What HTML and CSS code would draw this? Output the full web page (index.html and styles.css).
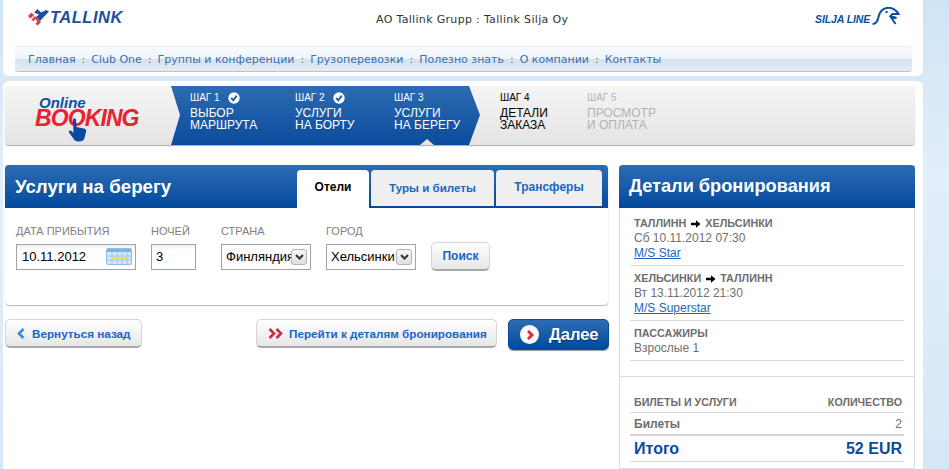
FILE: index.html
```html
<!DOCTYPE html>
<html lang="ru">
<head>
<meta charset="utf-8">
<title>Tallink Online Booking</title>
<link rel="stylesheet" href="styles.css">
</head>
<body>
<div class="page">
  <header class="top">
    <div class="brand-row">
      <div class="tallink">
        <svg class="tallink-mark" width="21" height="17" viewBox="0 0 21 17"><path d="M0 7 L3.5 3.5 L6 6 L2.5 9.5 Z M3.5 10.5 L7 7 L13 13 L9.5 16.5 L7.5 14.5 L9.5 12.5 L7 10 L5.5 12.5 Z" fill="#e8333c"/><path d="M6 3.5 L9.5 0 L13 3.5 L18 1 L21 2.5 L12 12 L8 8 L11 5.5 Z" fill="#1d4f9c"/></svg>
        <span class="tallink-name">TALLINK</span>
      </div>
      <div class="company">AO Tallink Grupp : Tallink Silja Oy</div>
      <div class="silja">
        <span class="silja-name">SILJA LINE</span>
        <svg width="32" height="20" viewBox="0 0 29 20"><path d="M1 17 C4 17 6 15 7 10 C8 5 10 2 15 1 C20 0 25 3 27 7 L21 7 L19 9 L25 11 L20 11 L24 17" fill="none" stroke="#0c4ea2" stroke-width="2"/><circle cx="15" cy="5" r="1.2" fill="#0c4ea2"/></svg>
      </div>
    </div>
    <nav class="nav">
      <a>Главная</a><span class="sep">:</span><a>Club One</a><span class="sep">:</span><a>Группы и конференции</a><span class="sep">:</span><a>Грузоперевозки</a><span class="sep">:</span><a>Полезно знать</a><span class="sep">:</span><a>О компании</a><span class="sep">:</span><a>Контакты</a>
    </nav>
  </header>

  <main class="main">
    <section class="steps">
      <div class="booking-logo">
        <span class="logo-online">Online</span>
        <span class="logo-booking">BOOKING</span>
        <svg class="logo-hand" width="19" height="24" viewBox="0 0 19 24"><path d="M5 1.5 C5 0 8 0 8 1.5 L8.5 9 L16 10.5 C18 11 18.5 12 18 14 L16.5 20 C16 22.5 14 23.5 11 23.5 C8 23.5 6 22.5 5 20 L1 14.5 C0 13 2 11.5 3.5 13 L5.5 15 Z" fill="#0b4a9e"/></svg>
      </div>
      <div class="steps-done">
        <div class="step step-one">
          <div class="step-num">ШАГ 1 <svg class="check" width="12" height="12" viewBox="0 0 12 12"><circle cx="6" cy="6" r="5.7" fill="#fff"/><path d="M3.2 6 L5.3 8.3 L8.8 3.6" fill="none" stroke="#1d5aa8" stroke-width="1.9"/></svg></div>
          <div class="step-title">ВЫБОР<br>МАРШРУТА</div>
        </div>
        <div class="step step-two">
          <div class="step-num">ШАГ 2 <svg class="check" width="12" height="12" viewBox="0 0 12 12"><circle cx="6" cy="6" r="5.7" fill="#fff"/><path d="M3.2 6 L5.3 8.3 L8.8 3.6" fill="none" stroke="#1d5aa8" stroke-width="1.9"/></svg></div>
          <div class="step-title">УСЛУГИ<br>НА БОРТУ</div>
        </div>
        <div class="step">
          <div class="step-num">ШАГ 3</div>
          <div class="step-title">УСЛУГИ<br>НА БЕРЕГУ</div>
        </div>
      </div>
      <div class="step step-four">
        <div class="step-num">ШАГ 4</div>
        <div class="step-title">ДЕТАЛИ<br>ЗАКАЗА</div>
      </div>
      <div class="step step-five">
        <div class="step-num">ШАГ 5</div>
        <div class="step-title">ПРОСМОТР<br>И ОПЛАТА</div>
      </div>
    </section>

    <div class="columns">
      <div class="left">
        <section class="card">
          <div class="card-head">
            <h1 class="head-title">Услуги на берегу</h1>
            <div class="tabs">
              <a class="tab tab-active tab-hotels">Отели</a>
              <a class="tab tab-tours">Туры и билеты</a>
              <a class="tab tab-transfers">Трансферы</a>
            </div>
          </div>
          <form class="search">
            <div class="field">
              <label class="label">Дата прибытия</label>
              <div class="box box-date">10.11.2012
                <svg class="cal" width="26" height="17" viewBox="0 0 26 17"><rect x=".5" y=".5" width="25" height="16" rx="1.5" fill="#d6e8f8" stroke="#8fbce4"/><rect x="1" y="1" width="24" height="3" fill="#7fb2e2"/><path d="M1 8H25M1 12H25M6 4V16M11 4V16M16 4V16M21 4V16" stroke="#9cc4e8" stroke-width="1"/><rect x="6" y="9" width="15" height="2.5" fill="#dce85a"/></svg>
              </div>
            </div>
            <div class="field field-nights">
              <label class="label">Ночей</label>
              <div class="box box-nights">3</div>
            </div>
            <div class="field field-country">
              <label class="label">Страна</label>
              <div class="box box-select box-country">Финляндия<span class="drop"><svg width="9" height="6" viewBox="0 0 9 6"><path d="M1 1 L4.5 4.5 L8 1" fill="none" stroke="#333" stroke-width="2"/></svg></span></div>
            </div>
            <div class="field field-city">
              <label class="label">Город</label>
              <div class="box box-select box-city">Хельсинки<span class="drop"><svg width="9" height="6" viewBox="0 0 9 6"><path d="M1 1 L4.5 4.5 L8 1" fill="none" stroke="#333" stroke-width="2"/></svg></span></div>
            </div>
            <button type="button" class="btn btn-search">Поиск</button>
          </form>
        </section>

        <div class="actions">
          <a class="btn btn-back"><svg width="8" height="11" viewBox="0 0 8 11"><path d="M6.5 1 L2 5.5 L6.5 10" fill="none" stroke="#3f86d8" stroke-width="2.6"/></svg>Вернуться назад</a>
          <a class="btn btn-details"><svg width="15" height="11" viewBox="0 0 15 11"><path d="M1.5 1 L6 5.5 L1.5 10 M8.5 1 L13 5.5 L8.5 10" fill="none" stroke="#c8303a" stroke-width="2.6"/></svg>Перейти к деталям бронирования</a>
          <a class="btn-next"><span class="next-dot"><svg width="8" height="10" viewBox="0 0 8 10"><path d="M2 1 L6 5 L2 9" fill="none" stroke="#e3213a" stroke-width="2.8"/></svg></span>Далее</a>
        </div>
      </div>

      <aside class="details">
        <h2 class="head-title details-head">Детали бронирования</h2>
        <div class="details-block">
          <div class="route">
            <div class="route-label">ТАЛЛИНН <svg class="arrow" width="10" height="8" viewBox="0 0 12 9"><path d="M0 3 H6 V0 L11.5 4.5 L6 9 V6 H0 Z" fill="#000"/></svg> ХЕЛЬСИНКИ</div>
            <div>Сб 10.11.2012 07:30</div>
            <a class="ship">M/S Star</a>
          </div>
          <div class="route">
            <div class="route-label">ХЕЛЬСИНКИ <svg class="arrow" width="10" height="8" viewBox="0 0 12 9"><path d="M0 3 H6 V0 L11.5 4.5 L6 9 V6 H0 Z" fill="#000"/></svg> ТАЛЛИНН</div>
            <div>Вт 13.11.2012 21:30</div>
            <a class="ship">M/S Superstar</a>
          </div>
          <div class="route route-pax">
            <div class="route-label">ПАССАЖИРЫ</div>
            <div>Взрослые 1</div>
          </div>
        </div>
        <div class="summary">
          <div class="sum-row sum-head"><span>БИЛЕТЫ И УСЛУГИ</span><span>КОЛИЧЕСТВО</span></div>
          <div class="sum-row sum-line"><b>Билеты</b><span>2</span></div>
          <div class="sum-row sum-total"><span>Итого</span><span>52 EUR</span></div>
        </div>
      </aside>
    </div>
  </main>
</div>
</body>
</html>
```

FILE: styles.css
```css
html, body { margin: 0; padding: 0; height: 469px; overflow: hidden; }
body {
  background: linear-gradient(180deg, #cfe4f6 0, #e2eef9 170px, #e0edf8 260px, #d5e7f7 469px);
  font-family: "Liberation Sans", Arial, sans-serif;
  color: #333;
}
.page { width: 920px; margin-left: 3px; }

/* header */
.top { background: #fff; height: 76px; border-radius: 0 0 6px 6px; }
.brand-row { height: 47px; display: flex; align-items: flex-start; }
.tallink { display: flex; align-items: center; margin: 9px 0 0 25px; width: 348px; height: 17px; }
.tallink-mark { flex: none; margin-right: 1px; }
.tallink-name { font: italic bold 16.5px "Liberation Sans", sans-serif; color: #1d4f9c; letter-spacing: .5px; }
.company { font: 11px "DejaVu Sans", Verdana, sans-serif; letter-spacing: .32px; color: #333; margin-top: 13px; width: 439px; white-space: nowrap; }
.silja { display: flex; align-items: flex-end; margin-top: 7px; }
.silja-name { font: italic bold 10.5px "Liberation Sans", sans-serif; color: #0c4ea2; letter-spacing: -.1px; margin-bottom: 2px; white-space: nowrap; }
.nav {
  margin: 0 11px 0 12px;
  height: 25px;
  padding-left: 13px;
  box-sizing: border-box;
  display: flex;
  align-items: center;
  font: 11px "DejaVu Sans", Verdana, sans-serif;
  color: #3a70ad;
  border-radius: 3px;
  border-bottom: 1px solid #b9c4d0;
  background: linear-gradient(180deg, #f7fafd 0, #eff4fa 50%, #d8e2ee 52%, #e4ebf4 100%);
  box-shadow: 0 -1px 0 #eef0f3;
  white-space: nowrap;
}
.sep { margin: 0 6px; color: #667; }

/* main */
.main { margin-top: 5px; background: #fff; border-radius: 6px 6px 0 0; padding: 5px 8px 0 2px; height: 388px; box-sizing: border-box; }

/* steps */
.steps {
  height: 59px;
  display: flex;
  border-radius: 4px;
  background: linear-gradient(180deg, #f5f5f5, #e4e4e4);
  box-shadow: 0 1px 1px #a9a9a9;
  margin-bottom: 20px;
}
.booking-logo { width: 166px; flex: none; position: relative; }
.logo-online { position: absolute; left: 34px; top: 8px; font: italic bold 15px "Liberation Sans", sans-serif; color: #11509f; }
.logo-booking { position: absolute; left: 30px; top: 19px; font: italic bold 23px "Liberation Sans", sans-serif; color: #ea2130; letter-spacing: -.9px; }
.logo-hand { position: absolute; left: 63px; top: 32px; }
.steps-done {
  flex: none;
  width: 309px;
  box-sizing: border-box;
  padding-left: 19px;
  display: flex;
  background: linear-gradient(180deg, #2d6bb2, #0a4b9c);
  clip-path: polygon(0 0, 298px 0, 309px 29px, 298px 59px, 263px 59px, 256px 53px, 249px 59px, 0 59px, 9px 29px);
}
.step { color: #fff; padding-top: 4px; }
.step-one { width: 105px; }
.step-two { width: 99px; }
.step-num { font-size: 10px; line-height: 13px; height: 15px; display: flex; align-items: center; gap: 4px; white-space: pre; }
.check { margin-left: 2px; }
.step-title { font-size: 12px; line-height: 12px; margin-top: 2px; white-space: nowrap; }
.step-four { color: #000; margin-left: 20px; width: 87px; flex: none; }
.step-five { color: #b2b2b2; flex: none; }

/* columns */
.columns { display: flex; gap: 11px; align-items: flex-start; }
.left { width: 603px; flex: none; }
.card { background: #fff; border-radius: 4px; box-shadow: 0 1px 1px #b5b5b5, 0 0 1px #d5d5d5; height: 140px; }
.card-head {
  height: 43px;
  display: flex;
  justify-content: space-between;
  border-radius: 4px 4px 0 0;
  background: linear-gradient(180deg, #2d6cb3, #034a9c);
}
.head-title { margin: 0; font: bold 18.7px/43px "Liberation Sans", sans-serif; color: #fff; padding-left: 10px; }
.tabs { display: flex; align-items: flex-end; gap: 2px; padding: 5px 6px 0 0; }
.tab {
  height: 36px;
  box-sizing: border-box;
  margin-bottom: 2px;
  border-radius: 4px 4px 0 0;
  background: #efefef;
  color: #1b66c0;
  font: bold 12px/35px "Liberation Sans", sans-serif;
  text-align: center;
}
.tab-active { background: #fff; color: #000; height: 38px; margin-bottom: 0; }
.tab-hotels { width: 72px; }
.tab-tours { width: 123px; font-size: 11.6px; }
.tab-transfers { width: 106px; }

.search { display: flex; align-items: flex-start; padding: 16px 0 0 11px; }
.field { display: flex; flex-direction: column; margin-right: 15px; }
.field-nights { margin-right: 25px; }
.label { font-size: 11px; line-height: 14px; height: 20px; color: #808080; text-transform: uppercase; white-space: nowrap; }
.box {
  height: 26px;
  box-sizing: border-box;
  border: 1px solid #a3a3a3;
  background: linear-gradient(180deg, #f0f0f0 0, #fff 5px);
  font-size: 13px;
  line-height: 24px;
  color: #000;
  padding-left: 5px;
  position: relative;
  white-space: nowrap;
  overflow: hidden;
}
.box-date { width: 120px; }
.box-nights { width: 45px; padding-left: 4px; }
.box-country { width: 90px; padding-left: 4px; background: #fdfdfd; }
.box-city { width: 90px; padding-left: 4px; background: #fdfdfd; }
.cal { position: absolute; right: 3px; top: 3px; }
.drop {
  position: absolute;
  right: 3px;
  top: 4px;
  width: 16px;
  height: 16px;
  box-sizing: border-box;
  border: 1px solid #b3b3b3;
  border-radius: 3px;
  background: linear-gradient(180deg, #f7f7f7, #dfdfdf);
  display: flex;
  align-items: center;
  justify-content: center;
}

.btn {
  flex: none;
  box-sizing: border-box;
  height: 29px;
  border: 1px solid #d6d6d6;
  border-bottom: 2px solid #a8a8a8;
  border-radius: 5px;
  background: linear-gradient(180deg, #fff, #e6e6e6);
  color: #1b66c0;
  font: bold 11.7px "Liberation Sans", sans-serif;
  display: flex;
  align-items: center;
  white-space: nowrap;
}
.btn-search { width: 59px; margin-top: 18px; justify-content: center; padding: 0; font-size: 12px; }
.actions { display: flex; align-items: flex-start; margin-top: 14px; }
.btn-back { width: 137px; padding-left: 11px; gap: 7px; }
.btn-details { width: 241px; margin-left: 114px; padding-left: 11px; gap: 6px; }
.btn-next {
  flex: none;
  box-sizing: border-box;
  width: 101px;
  height: 31px;
  margin-left: 11px;
  border-radius: 5px;
  border: 1px solid #0a4b9c;
  background: linear-gradient(180deg, #2d6cb3, #034a9c);
  box-shadow: 0 1px 1px #9a9a9a;
  color: #fff;
  font: bold 16.5px "Liberation Sans", sans-serif;
  text-shadow: 0 1px 1px #022f66;
  display: flex;
  align-items: center;
  padding-left: 11px;
  gap: 10px;
}
.next-dot { width: 19px; height: 19px; border-radius: 50%; background: #fff; display: flex; align-items: center; justify-content: center; }

/* details */
.details { width: 296px; flex: none; box-sizing: border-box; border: 1px solid #dcdcdc; border-top: 0; font-size: 12px; line-height: 15px; color: #707070; height: 304px; background: #fff; }
.details-head { margin: 0 -1px; border-radius: 4px 4px 0 0; height: 43px; background: linear-gradient(180deg, #2d6cb3, #034a9c); padding-left: 10px; font-size: 18.2px; }
.details-block { margin: 0 10px; padding: 8px 0 0; height: 168px; box-sizing: border-box; }
.route { box-sizing: border-box; padding: 0 4px; border-bottom: 1px solid #d9d9d9; margin-bottom: 5px; height: 50px; }
.route-pax { height: 35px; }
.route-label { font-weight: bold; font-size: 10.8px; color: #6d6d6d; display: flex; align-items: center; gap: 1.5px; white-space: pre; }
.arrow { flex: none; }
.ship { color: #1b66c0; text-decoration: underline; }
.summary { border-top: 1px solid #dcdcdc; padding: 18px 10px 0; }
.sum-row { display: flex; justify-content: space-between; padding: 0 2px 0 4px; }
.sum-head { height: 17px; font-weight: bold; font-size: 10.7px; color: #6d6d6d; border-bottom: 1px solid #d9d9d9; line-height: 15px; }
.sum-line { height: 21px; line-height: 22px; border-bottom: 2px solid #d4d4d4; }
.sum-line b { color: #6d6d6d; }
.sum-total { height: 25px; line-height: 25px; font-weight: bold; font-size: 16px; color: #0b4a9e; border-bottom: 1px solid #d9d9d9; }
```
